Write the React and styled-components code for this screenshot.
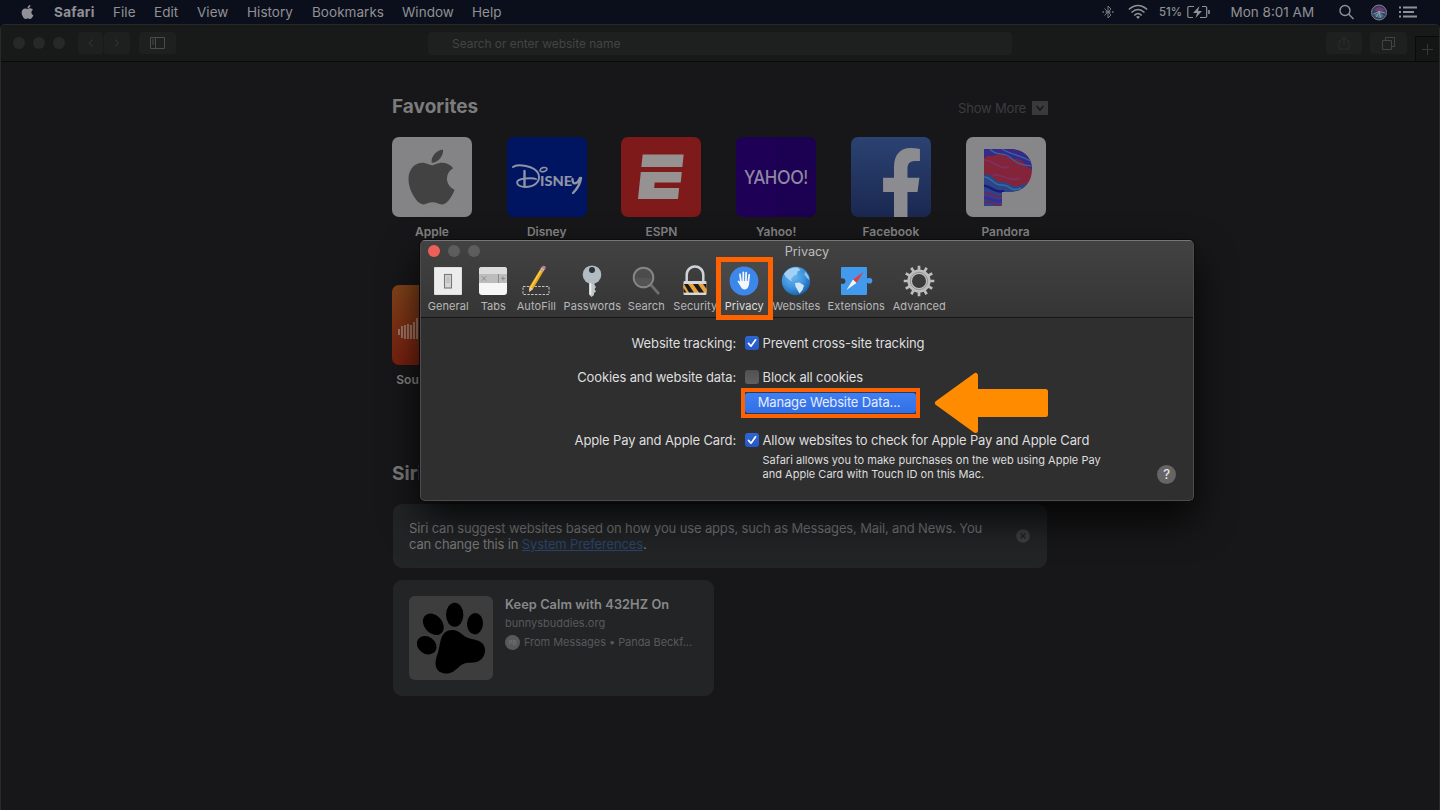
import React from 'react';
import styled, { createGlobalStyle } from 'styled-components';
import { FaApple, FaFacebookF } from 'react-icons/fa';

const Global = createGlobalStyle`
  * { box-sizing: border-box; }
  body { margin: 0; background: #171719; }
  svg { display: block; flex: none; }
`;

const Screen = styled.div`
  position: relative;
  width: 1440px;
  height: 810px;
  overflow: hidden;
  display: flex;
  flex-direction: column;
  background: #0c0f18;
  font-family: Inter, "Liberation Sans", sans-serif;
  white-space: nowrap;
`;

/* ---------- Menu bar ---------- */
const MenuBar = styled.header`
  height: 24px;
  flex: none;
  display: flex;
  align-items: center;
  padding: 0 23px 0 20px;
  background: #0b0f1b;
  color: #909196;
  font-size: 13.5px;
`;
const AppleMenu = styled.div`
  width: 34px;
  svg { width: 15px; height: 16px; }
`;
const MenuItem = styled.div`
  width: ${p => p.$w}px;
  font-weight: ${p => (p.$bold ? 700 : 400)};
  letter-spacing: ${p => (p.$bold ? 0.3 : 0.04)}px;
`;
const Status = styled.div`
  margin-left: auto;
  display: flex;
  align-items: center;
`;
const StatusItem = styled.div`
  width: ${p => p.$w}px;
  font-size: ${p => p.$size || 13.5}px;
  font-weight: ${p => (p.$size ? 500 : 400)};
`;

/* ---------- Browser window ---------- */
const Browser = styled.main`
  flex: 1;
  display: flex;
  flex-direction: column;
  border: 1px solid #29292a;
  border-bottom: 0;
  border-radius: 5px 5px 0 0;
  background: #171719;
  overflow: hidden;
`;
const Toolbar = styled.div`
  height: 37px;
  flex: none;
  display: flex;
  align-items: center;
  padding-left: 12px;
  background: #181919;
  border-bottom: 1px solid #0a0a0b;
`;
const Dots = styled.div`
  display: flex;
  gap: 8px;
  span {
    width: 12px;
    height: 12px;
    border-radius: 50%;
    background: ${p => p.$color};
  }
  span:first-child { background: ${p => p.$first || p.$color}; }
`;
const ToolButton = styled.div`
  width: ${p => p.$w}px;
  height: 22px;
  flex: none;
  margin-left: ${p => p.$ml || 0}px;
  display: flex;
  align-items: center;
  justify-content: center;
  border-radius: 3px;
  background: #1e1f1f;
`;
const Address = styled.div`
  width: 584px;
  height: 23px;
  flex: none;
  margin: 0 314px 0 252px;
  padding-left: 24px;
  border-radius: 4px;
  background: #1e1f1f;
  color: #434445;
  font-size: 12px;
  letter-spacing: -0.05px;
  line-height: 23px;
`;
const NewTab = styled.div`
  width: 24px;
  height: 25px;
  flex: none;
  margin-left: 8px;
  align-self: flex-end;
  display: grid;
  place-items: center;
  border: solid #0a0a0b;
  border-width: 1px 0 0 1px;
  background: #141515;
`;
const Page = styled.div`
  width: 656px;
  margin-left: 391px;
  display: flex;
  flex-direction: column;
`;
const SectionHead = styled.div`
  height: 24px;
  margin-top: ${p => p.$mt}px;
  display: flex;
  align-items: center;
  justify-content: space-between;
`;
const Heading = styled.h2`
  margin: 0;
  font-size: 19px;
  font-weight: 700;
  letter-spacing: 0.02px;
  color: #7c7c7d;
`;
const ShowMore = styled.div`
  display: flex;
  align-items: center;
  gap: 6px;
  padding-top: 4px;
  font-size: 13px;
  letter-spacing: -0.2px;
  color: #3c3c3e;
`;
const Tiles = styled.div`
  margin-top: 19px;
  display: grid;
  grid-template-columns: repeat(6, 80px);
  column-gap: 34.72px;
  row-gap: 46px;
`;
const TileItem = styled.div`
  height: 102px;
  display: flex;
  flex-direction: column;
  align-items: center;
  font-size: 12px;
  font-weight: 600;
  line-height: 15px;
  color: #858586;
`;
const Tile = styled.div`
  width: 80px;
  height: 80px;
  margin-bottom: 7px;
  flex: none;
  border-radius: 7px;
  overflow: hidden;
  display: grid;
  place-items: center;
  background: ${p => p.$bg};
`;
const AppleMark = styled(FaApple)`
  width: 47px;
  height: 64px;
  margin-right: 1px;
  color: #424243;
`;
const FacebookMark = styled(FaFacebookF)`
  width: 43px;
  height: 78px;
  margin: 11px 0 0 21px;
  color: #8c8c90;
`;
const SiriCard = styled.section`
  width: 654px;
  height: 64px;
  margin: 19px 0 12px 1px;
  padding: 0 17px 0 16px;
  display: flex;
  align-items: center;
  justify-content: space-between;
  border-radius: 9px;
  background: #222426;
  color: #78797a;
  font-size: 13px;
  letter-spacing: -0.145px;
  line-height: 16px;
  p { margin: 0; }
  u { color: #2b4570; }
`;
const LinkCard = styled.section`
  width: 321px;
  height: 116px;
  margin-left: 1px;
  padding: 16px;
  display: flex;
  gap: 12px;
  border-radius: 9px;
  background: #232426;
`;
const LinkText = styled.div`
  display: flex;
  flex-direction: column;
  font-size: 11px;
  color: #58595a;
`;
const LinkTitle = styled.div`
  height: 17px;
  font-size: 12.8px;
  font-weight: 600;
  letter-spacing: 0.06px;
  line-height: 17px;
  color: #888989;
`;
const LinkHost = styled.div`
  margin-top: 3px;
  line-height: 15px;
`;
const LinkSource = styled.div`
  margin-top: 3px;
  height: 16px;
  display: flex;
  align-items: center;
  gap: 4px;
  letter-spacing: -0.05px;
`;
const Avatar = styled.span`
  width: 15px;
  height: 15px;
  border-radius: 50%;
  background: #59595a;
  color: #777;
  font-size: 6px;
  line-height: 15px;
  text-align: center;
`;

/* ---------- Preferences window ---------- */
const Dialog = styled.div`
  position: absolute;
  left: 420px;
  top: 240px;
  width: 774px;
  height: 261px;
  display: flex;
  flex-direction: column;
  border: 1px solid #4d4d4e;
  border-top-color: #777;
  border-radius: 5px;
  background: #2f2f2f;
  box-shadow: 0 0 0 1px #0b0b0b, 0 18px 38px rgba(0, 0, 0, 0.8);
  color: #dededf;
`;
const DialogHead = styled.div`
  height: 77px;
  flex: none;
  border-radius: 4px 4px 0 0;
  border-bottom: 1px solid #151515;
  background: linear-gradient(#424242, #353535);
`;
const TitleRow = styled.div`
  height: 20px;
  display: grid;
  grid-template-columns: 1fr auto 1fr;
  align-items: center;
  padding: 0 7px;
  font-size: 12.7px;
  color: #bdbdbe;
`;
const Tabs = styled.nav`
  display: flex;
  padding-left: 4.3px;
`;
const Tab = styled.div`
  width: ${p => p.$w}px;
  height: 54px;
  padding-top: 4px;
  display: flex;
  flex-direction: column;
  align-items: center;
  font-size: 11px;
  line-height: 16px;
  letter-spacing: 0.08px;
  color: ${p => (p.$active ? '#dcdcdc' : '#b8b8b9')};
  svg { margin: 0 1px 1px 0; overflow: visible; }
`;
const Form = styled.div`
  flex: 1;
  display: flex;
  flex-direction: column;
  padding-top: 15px;
  font-size: 13px;
  letter-spacing: -0.13px;
`;
const Row = styled.div`
  height: 20px;
  margin-bottom: ${p => p.$mb || 0}px;
  display: grid;
  grid-template-columns: 315px 14px auto;
  align-items: center;
`;
const Label = styled.div`
  text-align: right;
`;
const Check = styled.div`
  width: 14px;
  height: 14px;
  margin-left: 9px;
  border-radius: 3px;
  display: grid;
  place-items: center;
  background: ${p => (p.$on ? 'linear-gradient(#2f66d2, #2558c8)' : 'linear-gradient(#505050, #606060)')};
`;
const Option = styled.div`
  margin-left: 12.5px;
`;
const ManageFrame = styled.div`
  width: 179px;
  height: 30px;
  margin: 1px 0 12px 320px;
  padding: 1px 0;
  border: 4px solid #ff6200;
  background: #2b3a5c;
`;
const ManageButton = styled.button`
  width: 171px;
  height: 20px;
  padding: 0 3px 0 0;
  border: 0;
  border-radius: 3px;
  background: linear-gradient(#3f7ff2, #326fe6);
  color: #e6ecfb;
  font: inherit;
  letter-spacing: -0.14px;
  padding-bottom: 2px;
  display: block;
`;
const NoteRow = styled.div`
  display: flex;
  justify-content: space-between;
  align-items: flex-start;
  padding: 3px 17px 0 341.5px;
`;
const Note = styled.p`
  margin: 0;
  font-size: 11px;
  line-height: 14px;
  letter-spacing: 0.01px;
`;
const Help = styled.div`
  width: 19px;
  height: 19px;
  margin-top: 12px;
  border-radius: 50%;
  background: #656565;
  color: #e4e4e4;
  font-size: 13px;
  font-weight: 500;
  line-height: 19px;
  text-align: center;
`;

/* ---------- Callouts ---------- */
const Highlight = styled.div`
  position: absolute;
  left: 716px;
  top: 257px;
  width: 57px;
  height: 63px;
  border: 5px solid #ff6200;
  background: rgba(255, 255, 255, 0.06);
`;
const Arrow = styled.svg`
  position: absolute;
  left: 930px;
  top: 368px;
`;

const Chevron = ({ d }) => (
  <svg width="8" height="10" viewBox="0 0 8 10" fill="none" stroke="#2f3031" strokeWidth="1.1"><path d={d} /></svg>
);
const Tick = () => (
  <svg width="14" height="14" viewBox="0 0 14 14" fill="none" stroke="#fff" strokeWidth="1.7" strokeLinecap="round" strokeLinejoin="round"><path d="M3.5 7.4 6 10.2 10.6 3.8" /></svg>
);

const DisneyMark = () => (
  <svg width="80" height="80" viewBox="0 0 80 80" fill="none" stroke="#8f93a6" strokeLinecap="round">
    <path d="M6 30C10 26.500 28 28.500 31.500 37C34 45 27 50 18 50C8 49 7 42.500 18 41.500C24 41 28 41.500 29 42" strokeWidth="1.9" />
    <path d="M17.500 34V49" strokeWidth="2.400" />
    <path d="M33 34C33 30 40 29.500 40 32C40 34 36 35 34 34.500" strokeWidth="1.500" />
    <text x="33" y="49" fontFamily="Lato" fontWeight="900" fontSize="13.500" fill="#8f93a6" stroke="none" textLength="32" lengthAdjust="spacingAndGlyphs">ISNE</text>
    <path d="M65.500 42C65 48 70 48 73 41M74 41C73 49 69 53 66 56" strokeWidth="2.400" />
  </svg>
);
const EspnMark = () => (
  <svg width="80" height="80" viewBox="0 0 80 80" fill="#979292">
    <g transform="translate(5 0) skewX(-6)">
      <rect x="18.500" y="17.500" width="41" height="12.500" />
      <rect x="18.500" y="35" width="41" height="10.500" />
      <rect x="18.500" y="45" width="15" height="7" />
      <rect x="18.500" y="51" width="40" height="11" />
    </g>
  </svg>
);
const YahooMark = () => (
  <svg width="80" height="80" viewBox="0 0 80 80">
    <rect x="40" width="40" height="80" fill="#170045" opacity=".3" />
    <text x="8.500" y="47" fontFamily="Lato" fontSize="18.500" fill="#8f88a3" textLength="63.500" lengthAdjust="spacingAndGlyphs">YAHOO!</text>
  </svg>
);
const PandoraMark = () => (
  <svg width="80" height="80" viewBox="0 0 80 80">
    <defs>
      <clipPath id="pandora"><path d="M18 12H43C57 12 66 20 66 32C66 46 57 55 43 55H36V67Q36 69 34 69H18Z" /></clipPath>
    </defs>
    <g clipPath="url(#pandora)" fill="none">
      <rect width="80" height="80" fill="#84243a" />
      <path d="M18 12H66V32C58 30 58 22 50 22C42 23 37 14 30 18C25 21 22 16 18 22Z" fill="#352a86" />
      <path d="M18 38C26 34 28 46 36 45C45 45 46 54 60 46L66 60V80H18Z" fill="#2a4589" />
      <path d="M24 12C30 20 38 14 45 21S59 28 66 29M36 12C43 17 51 17 65 24" stroke="#3a62a0" strokeWidth="1.300" />
      <path d="M17 40C26 39 27 49 36 48S43 56 55 51" stroke="#31709f" strokeWidth="1.500" />
      <path d="M17 49C23 47 28 57 38 54" stroke="#211874" strokeWidth="2.500" />
      <path d="M17 56C24 54 29 63 38 58M17 66C25 62 30 70 38 68" stroke="#702653" strokeWidth="2" />
      <path d="M17 61C24 59 30 67 38 63" stroke="#3b2b95" strokeWidth="3" />
      <path d="M18 23C26 22 32 33 43 30M27 38C36 36 43 46 54 41" stroke="#7c3060" strokeWidth="1.800" />
    </g>
  </svg>
);
const SoundMark = () => (
  <svg width="80" height="80" viewBox="0 0 80 80" stroke="#a58676" strokeWidth="1.700">
    <path d="M7 44V50M10 41V53M13 40V54M16 39V54M19 40V54M22 37V54M25 33V54M28 31V54M31 33V54M34 33V54" />
  </svg>
);

const favorites = [
  ['Apple', '#848486', <AppleMark />],
  ['Disney', '#001562', <DisneyMark />],
  ['ESPN', '#7e1a1a', <EspnMark />],
  ['Yahoo!', '#1f0057', <YahooMark />],
  ['Facebook', 'linear-gradient(#2b4272, #1a2850)', <FacebookMark preserveAspectRatio="none" />],
  ['Pandora', '#878789', <PandoraMark />],
  ['SoundCloud', 'linear-gradient(#81441a, #791f10)', <SoundMark />],
];

const Paw = () => (
  <svg width="84" height="84" viewBox="0 0 84 84">
    <rect width="84" height="84" rx="6" fill="#3d3d3d" />
    <ellipse cx="45.700" cy="18.700" rx="8.700" ry="12" />
    <ellipse cx="24.300" cy="28.300" rx="9" ry="12" transform="rotate(-42 24.3 28.3)" />
    <ellipse cx="66" cy="27.700" rx="8" ry="10.700" transform="rotate(4 66 27.7)" />
    <ellipse cx="17.700" cy="49.300" rx="8.500" ry="10.500" transform="rotate(-55 17.7 49.3)" />
    <path d="M43 34C49 33.500 52 38 57 41C63 44 70 43 74 48C78 54 76 62 69 65.500C62 68 57 65 51 70C45 75.500 42 78 36 77.500C27 76.500 25 69 27.500 61C30 55 30 50 32 43C34 37 37 34.500 43 34Z" />
  </svg>
);

const icons = {
  General: (
    <svg width="30" height="32" viewBox="0 0 30 32">
      <rect x="1" y="2" width="28" height="28" rx="1" fill="#dedede" />
      <rect x="2" y="3" width="26" height="26" fill="#ececec" />
      <rect x="11.500" y="9.500" width="7" height="13.500" fill="#d5d5d5" stroke="#777" strokeWidth="1.100" />
      <rect x="13" y="11.500" width="4" height="6.500" fill="#c3c3c3" />
    </svg>
  ),
  Tabs: (
    <svg width="30" height="32" viewBox="0 0 30 32">
      <rect x="1" y="2" width="28" height="28" rx="3" fill="#f6f6f6" />
      <path d="M1 9V5Q1 2 4 2H26Q29 2 29 5V9Z" fill="#dcdcdc" />
      <rect x="1" y="9" width="28" height="9" fill="#bcbcbc" />
      <path d="M20.500 9V18M4 11.500 8 15.500M8 11.500 4 15.500M23 13.500H27M25 11.500V15.500" stroke="#858585" strokeWidth=".9" />
    </svg>
  ),
  AutoFill: (
    <svg width="30" height="32" viewBox="0 0 30 32">
      <rect x="2" y="21.500" width="26" height="8" fill="none" stroke="#c4c4c4" strokeDasharray="2.500 1.300" />
      <path d="M19.200 4.200 22.500 6.300 12 24 8 27 8.700 21.500Z" fill="#e9a91f" />
      <path d="M20 5.500 9.700 22.500" stroke="#ffd654" strokeWidth="1.200" />
      <path d="M8.700 21.500 12 24 8 27Z" fill="#e7d0aa" />
      <path d="M19.200 4.200 20.500 2 24 4.200 22.500 6.300Z" fill="#b9bcc2" />
      <path d="M20.500 2Q22.500 0 24.200 1.300Q25.500 2.700 24 4.200Z" fill="#dd7199" />
    </svg>
  ),
  Passwords: (
    <svg width="30" height="32" viewBox="0 0 30 32">
      <path d="M12 16H17.500V20L19 22 17.500 24 19 26.500 17 28V30L14.500 32 12 29.500Z" fill="#bfc6ca" />
      <circle cx="15" cy="9.700" r="9.300" fill="#b0bcc2" />
      <path d="M13.500 18V29.500" stroke="#edf1f3" strokeWidth="1.500" />
      <circle cx="15" cy="5" r="3" fill="#303335" />
    </svg>
  ),
  Search: (
    <svg width="30" height="32" viewBox="0 0 30 32" fill="none">
      <path d="M20 20 28 29" stroke="#6d6d6d" strokeWidth="2.800" />
      <circle cx="12.500" cy="12.500" r="9.800" fill="#4c4c4c" stroke="#858585" strokeWidth="2" />
      <path d="M4.500 13A8 8 0 0 0 20.500 13Z" fill="#545454" />
    </svg>
  ),
  Security: (
    <svg width="30" height="32" viewBox="0 0 30 32">
      <path d="M6.700 18V10C6.700-1.200 23.300-1.200 23.300 10V18" fill="none" stroke="#cfd2d6" strokeWidth="2.500" />
      <rect x="3.500" y="16" width="23" height="14" rx="1" fill="#d4d8da" />
      <rect x="3.500" y="19" width="23" height="8.500" fill="#e8a33d" />
      <path d="M4 19H8L14 27.500H9ZM13 19H18L24 27.500H19ZM23 19H26.500V24ZM3.500 23V27.500H6.500Z" fill="#1b1b1b" />
    </svg>
  ),
  Privacy: (
    <svg width="30" height="32" viewBox="0 0 30 32">
      <circle cx="15" cy="16" r="14.400" fill="#2f80e9" />
      <g fill="none" stroke="#f4f8fd" strokeWidth="1.800" strokeLinecap="round">
        <path d="M12 17 11 9.500M14.300 16V7.300M16.900 16 17.200 7.600M19.300 17 20.200 10M12 20 9.500 16.500" />
      </g>
      <path d="M11 16H20.200C20.500 20.500 19 24.300 15.800 24.500C12.700 24.500 11.800 21.500 10 18.500Z" fill="#f4f8fd" />
    </svg>
  ),
  Websites: (
    <svg width="30" height="32" viewBox="0 0 30 32">
      <defs><radialGradient id="ocean" cx=".4" cy=".35" r=".65"><stop offset="0" stopColor="#6db6f3" /><stop offset=".6" stopColor="#3f93dd" /><stop offset="1" stopColor="#1c66b4" /></radialGradient></defs>
      <circle cx="15" cy="16" r="14.200" fill="url(#ocean)" />
      <path d="M3 9C7 3.500 12 2.200 17 2.700L19.500 5 16.500 6.500 16 9.500 12.500 11 10 14 11.500 16.500 8.500 15 5 12Z" fill="#a3d1f3" />
      <path d="M14 18 18.500 17.500 23 20.500 21.500 25 18.500 28.500 16.500 25 14.500 21.500Z" fill="#cfe6f6" />
      <path d="M24 6.500 27.500 11 28.300 15 26 13 23.500 9.500Z" fill="#94c5ed" />
    </svg>
  ),
  Extensions: (
    <svg width="32" height="32" viewBox="0 0 32 32">
      <path d="M2 2H26Q27 2 27 3V13.500C32 10.500 33 20 27 17.500V29Q27 30 26 30H2Q1 30 1 29V18.500C7 21 7 11.500 1 13.500V3Q1 2 2 2Z" fill="#419aed" />
      <circle cx="29.500" cy="15.700" r="2.800" fill="#419aed" />
      <path d="M23.500 7 16.500 18 13 14.500Z" fill="#e13f3e" />
      <path d="M6.500 25 13 14.500 16.500 18Z" fill="#f4f4f4" />
    </svg>
  ),
  Advanced: (
    <svg width="32" height="32" viewBox="0 0 32 32">
      <g stroke="#bdbdbd" strokeWidth="2.700">
        {[0, 30, 60, 90, 120, 150].map(a => <path key={a} d="M16 .700V6M16 26V31.300" transform={`rotate(${a} 16 16)`} />)}
      </g>
      <circle cx="16" cy="16" r="9.300" fill="none" stroke="#bdbdbd" strokeWidth="4.600" />
      <circle cx="16" cy="16" r="8.700" fill="none" stroke="#8f8f8f" strokeWidth=".9" />
    </svg>
  ),
};
const tabs = [
  ['General', 46], ['Tabs', 44], ['AutoFill', 42], ['Passwords', 70], ['Search', 38],
  ['Security', 60], ['Privacy', 38], ['Websites', 66], ['Extensions', 54], ['Advanced', 72],
];
const menus = [['File', 41], ['Edit', 43], ['View', 50], ['History', 65], ['Bookmarks', 90], ['Window', 70], ['Help', 40]];

export default function App() {
  return (
    <Screen>
      <Global />
      <MenuBar>
        <AppleMenu><FaApple /></AppleMenu>
        <MenuItem $w={59} $bold>Safari</MenuItem>
        {menus.map(([name, w]) => <MenuItem key={name} $w={w}>{name}</MenuItem>)}
        <Status>
          <StatusItem $w={26}>
            <svg width="12" height="16" viewBox="0 0 12 16" fill="none" stroke="#75777d">
              <path d="M2.500 4.500 9 11 6 14V2L9 5 2.500 11.500" /><path d="M.500 8H2M3.500 8H5M7 8H8.500M10 8H11.500" strokeWidth="1.700" />
            </svg>
          </StatusItem>
          <StatusItem $w={31}>
            <svg width="20" height="16" viewBox="0 0 20 16" fill="none" stroke="#909196" strokeWidth="1.500">
              <path d="M.800 5.500Q10-2.500 19.200 5.500M3.500 8.500Q10 2.500 16.500 8.500M6.300 11.500Q10 7.500 13.700 11.500" />
              <path d="M10 15 8 12.800Q10 11 12 12.800Z" fill="#909196" stroke="none" />
            </svg>
          </StatusItem>
          <StatusItem $w={28} $size={11.4}>51%</StatusItem>
          <StatusItem $w={43.5}>
            <svg width="24" height="14" viewBox="0 0 24 14" fill="none" stroke="#909196" strokeWidth="1.200">
              <path d="M7 1.500H2Q.800 1.500.800 2.700V11.300Q.800 12.500 2 12.500H6M15 1.500H18.500Q19.700 1.500 19.700 2.700V11.300Q19.700 12.500 18.500 12.500H13" />
              <path d="M12.500 1 6 8H10L8.500 13 15 6H11Z" fill="#909196" stroke="none" /><path d="M22 5V9" strokeWidth="1.600" />
            </svg>
          </StatusItem>
          <StatusItem $w={108.5}>Mon 8:01 AM</StatusItem>
          <StatusItem $w={32}>
            <svg width="16" height="16" viewBox="0 0 16 16" fill="none" stroke="#909196" strokeWidth="1.400"><circle cx="6" cy="6.500" r="5" /><path d="M9.500 10 14.500 15" /></svg>
          </StatusItem>
          <StatusItem $w={28}>
            <svg width="17" height="17" viewBox="0 0 17 17" fill="none">
              <circle cx="8" cy="8.500" r="7.500" fill="#323b62" stroke="#85838c" />
              <path d="M3 6Q8 0 14 6L9 9Z" fill="#6b3d70" /><path d="M3 11Q8 17 13 12L9 8Z" fill="#3a7787" />
              <path d="M2.500 10 8 7.500 14 9M8 7.500 9.500 13.500M5 13 8.500 7.500" stroke="#a1a2b1" strokeWidth=".9" />
            </svg>
          </StatusItem>
          <StatusItem $w={18}>
            <svg width="18" height="12" viewBox="0 0 18 12" stroke="#909196" strokeWidth="1.800"><path d="M0 1.500H2M0 6H2M0 10.500H2M4 1.500H18M4 6H15M4 10.500H18" /></svg>
          </StatusItem>
        </Status>
      </MenuBar>

      <Browser>
        <Toolbar>
          <Dots $color="#272929"><span /><span /><span /></Dots>
          <ToolButton $w={25} $ml={13}><Chevron d="M5.500 1.500 2 5 5.500 8.500" /></ToolButton>
          <ToolButton $w={26} $ml={1}><Chevron d="M2 1.500 5.500 5 2 8.500" /></ToolButton>
          <ToolButton $w={37} $ml={9}>
            <svg width="15" height="12" viewBox="0 0 15 12" fill="none" stroke="#4a4b4c"><path d="M.500.500H14.500V11.500H.500ZM5.500.500V11.500M2 3H4M2 5H4M2 7H4" /></svg>
          </ToolButton>
          <Address>Search or enter website name</Address>
          <ToolButton $w={36}>
            <svg width="12" height="14" viewBox="0 0 12 14" fill="none" stroke="#2b2c2d"><path d="M3.500 5H1V13H11V5H8.500M6 9V1M3.500 3.500 6 1 8.500 3.500" /></svg>
          </ToolButton>
          <ToolButton $w={37} $ml={8}>
            <svg width="13" height="13" viewBox="0 0 13 13" fill="none" stroke="#434444"><path d="M.500 3.500H9.500V12.500H.500ZM3.500 3.500V.500H12.500V9.500H9.500" /></svg>
          </ToolButton>
          <NewTab><svg width="11" height="11" viewBox="0 0 11 11" stroke="#363738"><path d="M5.500 0V11M0 5.500H11" /></svg></NewTab>
        </Toolbar>

        <Page>
          <SectionHead $mt={32}>
            <Heading>Favorites</Heading>
            <ShowMore>
              Show More
              <svg width="16" height="14" viewBox="0 0 16 14"><rect width="16" height="14" fill="#3a3a3c" /><path d="M4.500 5 8 9 11.500 5" fill="none" stroke="#18181a" strokeWidth="1.500" /></svg>
            </ShowMore>
          </SectionHead>
          <Tiles>
            {favorites.map(([name, bg, mark]) => (
              <TileItem key={name}><Tile $bg={bg}>{mark}</Tile>{name}</TileItem>
            ))}
          </Tiles>
          <SectionHead $mt={74}><Heading>Siri Suggestions</Heading></SectionHead>
          <SiriCard>
            <p>
              Siri can suggest websites based on how you use apps, such as Messages, Mail, and News. You<br />
              can change this in <u>System Preferences</u>.
            </p>
            <svg width="14" height="14" viewBox="0 0 14 14"><circle cx="7" cy="7" r="6.800" fill="#3e3f40" /><path d="M4.500 4.500 9.500 9.500M9.500 4.500 4.500 9.500" stroke="#202122" strokeWidth="1.200" /></svg>
          </SiriCard>
          <LinkCard>
            <Paw />
            <LinkText>
              <LinkTitle>Keep Calm with 432HZ On</LinkTitle>
              <LinkHost>bunnysbuddies.org</LinkHost>
              <LinkSource><Avatar>PB</Avatar>From Messages • Panda Beckf...</LinkSource>
            </LinkText>
          </LinkCard>
        </Page>
      </Browser>

      <Dialog>
        <DialogHead>
          <TitleRow>
            <Dots $color="#5d5d5e" $first="#ed6058"><span /><span /><span /></Dots>
            Privacy
          </TitleRow>
          <Tabs>
            {tabs.map(([name, w]) => (
              <Tab key={name} $w={w} $active={name === 'Privacy'}>{icons[name]}{name}</Tab>
            ))}
          </Tabs>
        </DialogHead>
        <Form>
          <Row $mb={14}>
            <Label>Website tracking:</Label><Check $on><Tick /></Check><Option>Prevent cross-site tracking</Option>
          </Row>
          <Row>
            <Label>Cookies and website data:</Label><Check /><Option>Block all cookies</Option>
          </Row>
          <ManageFrame><ManageButton>Manage Website Data...</ManageButton></ManageFrame>
          <Row>
            <Label>Apple Pay and Apple Card:</Label><Check $on><Tick /></Check><Option>Allow websites to check for Apple Pay and Apple Card</Option>
          </Row>
          <NoteRow>
            <Note>Safari allows you to make purchases on the web using Apple Pay<br />and Apple Card with Touch ID on this Mac.</Note>
            <Help>?</Help>
          </NoteRow>
        </Form>
      </Dialog>

      <Highlight />
      <Arrow width="122" height="70" viewBox="0 0 122 70">
        <path d="M7.500 35 45.500 7.500V23.500H115.500V46.500H45.500V62.500Z" fill="#ff8c00" stroke="#ff8c00" strokeWidth="5" strokeLinejoin="round" />
      </Arrow>
    </Screen>
  );
}
